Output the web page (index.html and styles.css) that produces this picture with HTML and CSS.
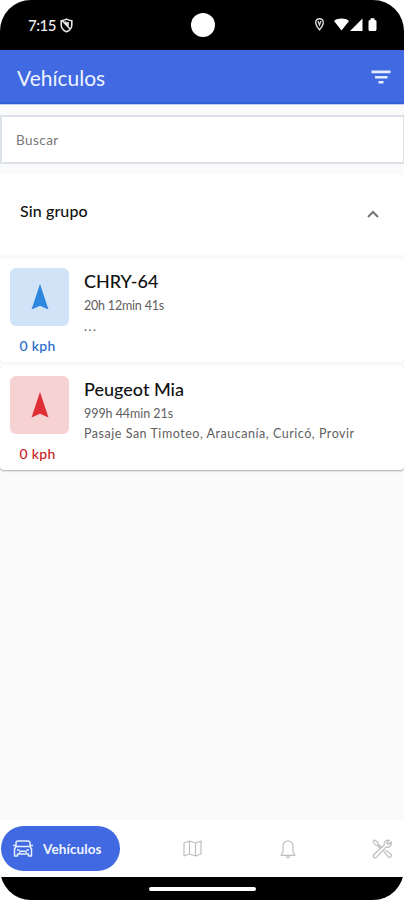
FILE: index.html
```html
<!DOCTYPE html>
<html lang="es">
<head>
<meta charset="utf-8">
<title>Vehículos</title>
<link rel="stylesheet" href="styles.css">
</head>
<body>
<div class="phone">
  <div class="status">
    <span class="clock">7:15</span>
    <svg class="shield" width="13" height="15" viewBox="0 0 13 15" fill="none" stroke="#e4e4e4" stroke-width="1.6"><path d="M6.500 1.200C4.800 2.300 3 2.600 1.200 2.700V7c0 3.200 2.200 5.500 5.300 6.800C9.600 12.500 11.800 10.200 11.800 7V2.700C10 2.600 8.200 2.300 6.500 1.200ZM2.500 3l7.600 8M5 3.500l3 3.500V4"/></svg>
    <span class="camera"></span>
    <svg class="signals" width="64" height="16" viewBox="0 0 64 16" fill="#fff"><path d="M5.500 1.700a3.800 3.800 0 0 0-3.800 3.900c0 2.700 3.800 7.300 3.800 7.300s3.800-4.600 3.800-7.300A3.800 3.800 0 0 0 5.500 1.700Z" fill="none" stroke="#ddd" stroke-width="1.400"/><path d="M4 4l1.500 4L7 4" fill="none" stroke="#ddd" stroke-width="1.300"/><path d="M20 4C24 .8 31 .8 35 4L27.500 13.500ZM36 14 48.500 1.500V14ZM54.500 4.500Q54.500 3 55.800 3H56.500V1.300H60.500V3h.7Q62.500 3 62.500 4.500V12.500Q62.500 14 61 14h-5Q54.500 14 54.500 12.500Z"/></svg>
  </div>
  <header class="appbar">
    <h1>Vehículos</h1>
    <svg width="20" height="15" viewBox="0 0 20 15" fill="#e3edff"><path d="M.5.500h19v2.800H.5zM4 6h12.500v2.500H4zM7.500 11h5v2.500h-5z"/></svg>
  </header>
  <div class="search">Buscar</div>
  <section class="group">
    <h2>Sin grupo</h2>
    <svg width="12" height="8" viewBox="0 0 12 8" fill="none" stroke="#777" stroke-width="2"><path d="M1 7l5-5 5 5"/></svg>
  </section>
  <article class="card blue">
    <div class="side">
      <div class="tile"><svg width="18" height="26" viewBox="0 0 18 26"><path d="M9 0 17.500 25.500 9 21.800.5 25.500Z"/></svg></div>
      <span class="speed">0 kph</span>
    </div>
    <div class="info"><h3>CHRY-64</h3><p class="time">20h 12min 41s</p><p class="place dots">...</p></div>
  </article>
  <article class="card red">
    <div class="side">
      <div class="tile"><svg width="18" height="26" viewBox="0 0 18 26"><path d="M9 0 17.500 25.500 9 21.800.5 25.500Z"/></svg></div>
      <span class="speed">0 kph</span>
    </div>
    <div class="info"><h3>Peugeot Mia</h3><p class="time">999h 44min 21s</p><p class="place">Pasaje San Timoteo, Araucanía, Curicó, Provir</p></div>
  </article>
  <nav class="tabs">
    <div class="active">
      <svg width="20" height="17" viewBox="0 0 20 17" fill="none" stroke="#e5eeff" stroke-width="1.500" stroke-linejoin="round"><path d="M3 6.500V3Q3 1 5 1h10q2 0 2 2v3.500M0 5.500h3M17 5.500h3M3 6.500h14L18.500 9v7h-3v-2h-11v2h-3V9ZM4 10h2.500M13.500 10H16M6.500 13l.7-1.800h5.600l.7 1.800"/></svg>
      <span>Vehículos</span>
    </div>
    <svg class="map" width="19" height="17" viewBox="0 0 19 17"><path d="M1 3 6.500 1 12.500 3 18 1V14L12.500 16 6.500 14 1 16ZM6.500 1V14M12.500 3V16"/></svg>
    <svg class="bell" width="16" height="20" viewBox="0 0 16 20"><path d="M8 .5V2M8 2C4.800 2 3 4.300 3 7.300V13L1 16.300H15L13 13V7.300C13 4.300 11.200 2 8 2ZM6.300 16.500Q6.500 18.700 8 18.700T9.700 16.500"/></svg>
    <svg class="tools" width="21" height="20" viewBox="0 0 21 20"><path d="M1 2.500 2.500 1 6 3.200V5L9.500 8.500M1 2.500 3.500 6H5L8.500 9.700M11.500 12l4.700 5.800q1.200 1.300 2.600 0t0-2.600L13.500 11M17.500 1.300C14.500.3 11.500 2.700 12.300 6L1.800 15.500q-1.400 1.500 0 2.700t2.700 0L14 8.200c3.500.8 6.200-2.200 5.200-5.200L16.500 5.500 14.700 4Z"/></svg>
  </nav>
  <div class="gesture"><span></span></div>
</div>
</body>
</html>
```
FILE: styles.css
```css
* { box-sizing: border-box; }
body { margin: 0; background: #fff; font-family: Lato, "Liberation Sans", sans-serif; }
h1, h2, h3, p { margin: 0; font-weight: 400; white-space: nowrap; }
svg { display: block; flex: none; }
.phone { width: 404px; height: 900px; overflow: hidden; border-radius: 31px; background: #fafafa; display: flex; flex-direction: column; }
.status { position: relative; flex: none; height: 50px; background: #000; display: flex; align-items: center; padding: 0 26px 0 28px; }
.clock { color: #eee; font-size: 15px; font-weight: 500; letter-spacing: -.5px; width: 32px; }
.camera { position: absolute; left: 191px; top: 13px; width: 24px; height: 24px; border-radius: 50%; background: #fff; }
.signals { margin-left: auto; }
.appbar { flex: none; height: 55px; background: #4169e1; border-bottom: 1px solid #c2d0f7; box-shadow: inset 0 -2px #3260d8; display: flex; align-items: center; justify-content: space-between; padding: 0 13px 0 17px; }
.appbar h1 { color: #edf3ff; font-size: 21px; }
.search { flex: none; height: 49px; margin-top: 10px; background: #fff; border: 2px solid #dce2e8; border-right-width: 1px; display: flex; align-items: center; padding-left: 14px; color: #777; font-size: 13.500px; letter-spacing: .45px; }
.group { flex: none; height: 81px; margin-top: 10px; background: #fff; border-radius: 4px; display: flex; align-items: center; justify-content: space-between; padding: 0 25px 8px 20px; }
.group h2 { font-size: 16px; font-weight: 500; color: #111; letter-spacing: .1px; }
.group svg { margin-top: 6px; }
.card { flex: none; height: 104px; background: #fff; border-radius: 4px; display: flex; padding: 10px 10px 0; gap: 15px; }
.card.blue { margin-top: 3px; box-shadow: 0 0 3px #eee; }
.card.red { margin-top: 4px; box-shadow: 0 1px 2px #aaa; clip-path: inset(0 0 -5px); }
.side { width: 59px; display: flex; flex-direction: column; align-items: center; }
.tile { width: 59px; height: 58px; border-radius: 6px; display: flex; align-items: center; justify-content: center; }
.blue .tile { background: #d0e3f7; fill: #2e86dd; }
.red .tile { background: #f7d2d3; fill: #df3035; }
.speed { margin-top: 11px; margin-right: 4px; font-size: 14px; line-height: 18px; font-weight: 500; letter-spacing: .3px; }
.blue .speed { color: #1c67cf; }
.red .speed { color: #ca2026; }
.info { padding-top: 2px; }
.info h3 { font-size: 18px; line-height: 22px; font-weight: 500; color: #111; }
.time, .place { color: #606060; font-size: 12.500px; line-height: 20px; letter-spacing: .53px; }
.time { margin-top: 4px; letter-spacing: -.05px; }
.blue .time { letter-spacing: -.2px; }
.dots { letter-spacing: 1.500px; line-height: 22px; }
.tabs { flex: none; height: 57px; margin-top: auto; background: #fff; display: flex; align-items: center; padding: 0 11px 0 1px; }
.tabs > svg { fill: none; stroke: #bebebe; stroke-width: 1.200; stroke-linejoin: round; }
.active { width: 119px; height: 45px; border-radius: 23px; background: #4169e1; display: flex; align-items: center; gap: 10px; padding-left: 12px; color: #f0f5ff; font-size: 13.500px; font-weight: 700; letter-spacing: .1px; }
.map { margin-left: 63px; }
.bell { margin-left: 78px; }
.tools { margin-left: auto; }
.gesture { flex: none; height: 23px; background: #000; padding-top: 10px; }
.gesture span { display: block; width: 107px; height: 4px; margin: 0 auto; border-radius: 2px; background: #fff; }
```
